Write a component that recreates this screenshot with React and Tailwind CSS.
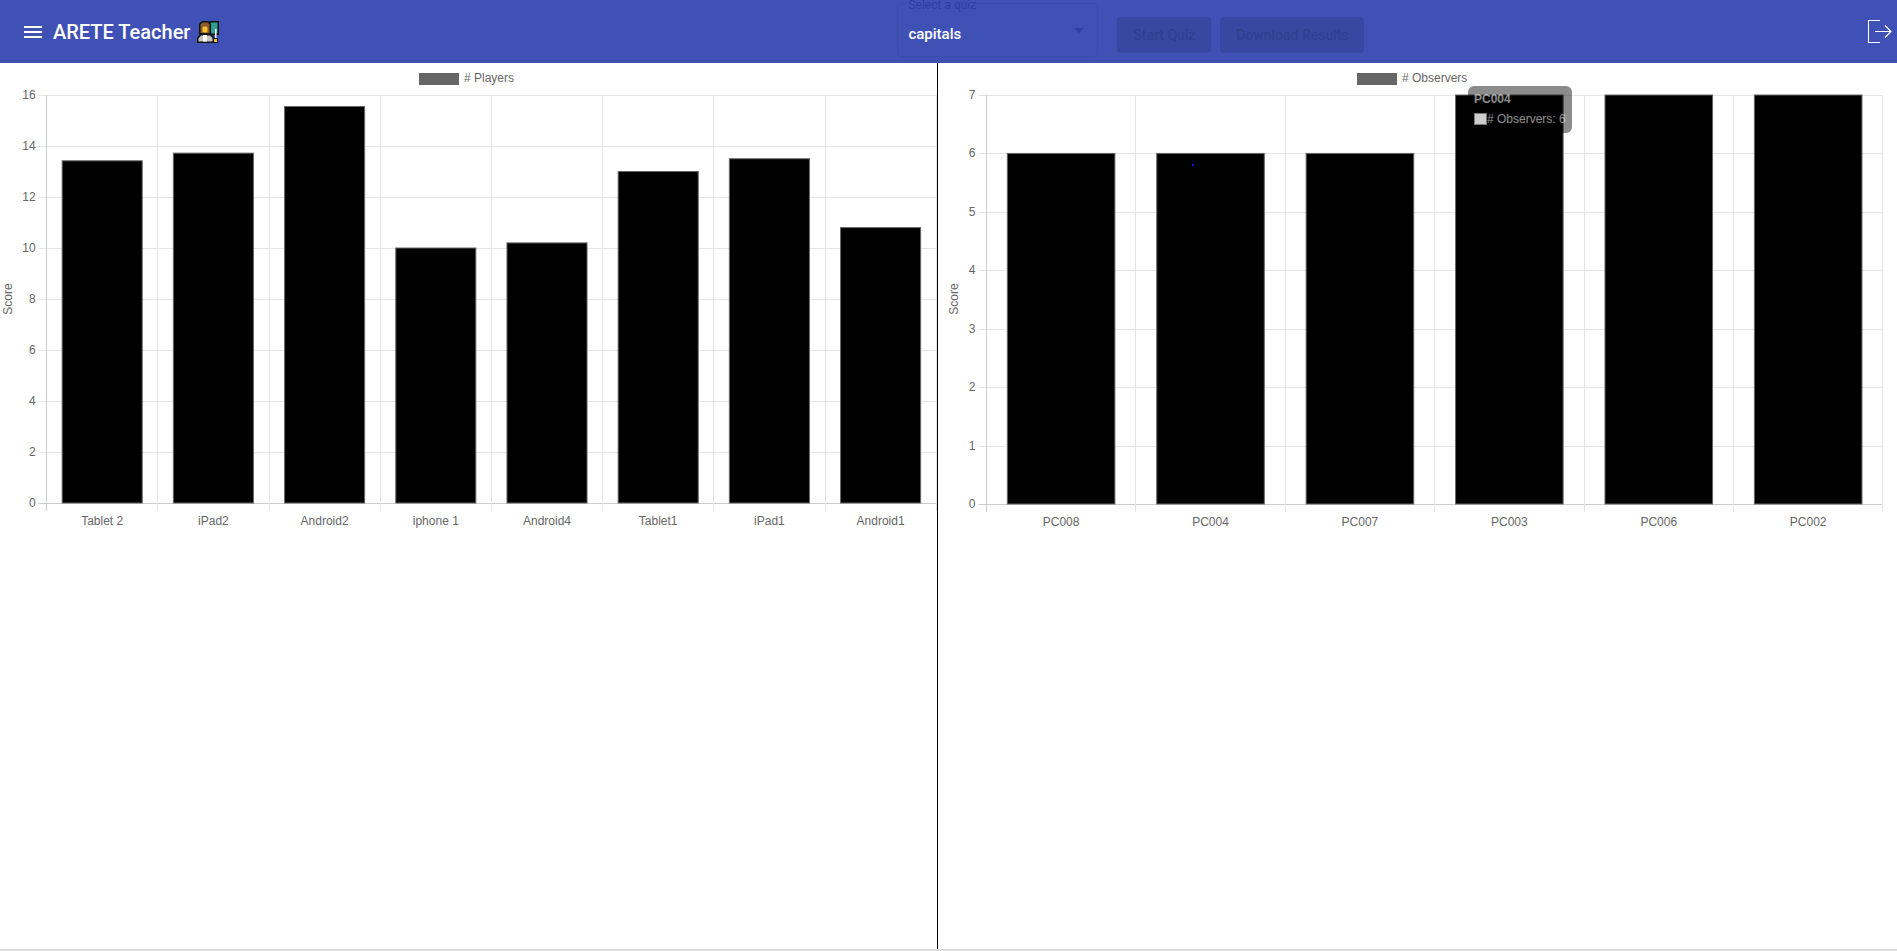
import { useState } from 'react';

const players = [
  { label: 'Tablet 2', value: 13.42 },
  { label: 'iPad2', value: 13.72 },
  { label: 'Android2', value: 15.55 },
  { label: 'iphone 1', value: 10 },
  { label: 'Android4', value: 10.2 },
  { label: 'Tablet1', value: 13 },
  { label: 'iPad1', value: 13.5 },
  { label: 'Android1', value: 10.8 },
];

const observers = [
  { label: 'PC008', value: 6 },
  { label: 'PC004', value: 6 },
  { label: 'PC007', value: 6 },
  { label: 'PC003', value: 7 },
  { label: 'PC006', value: 7 },
  { label: 'PC002', value: 7 },
];

// bar chart drawn the way chart.js lays it out (72% bar width, ticks sticking out 8px)
const BarPanel = ({ data, legend, max, step, left, right, top, bottom, legendX, scoreX, width }) => {
  const catW = (right - left) / data.length;
  const unit = (bottom - top) / max;
  const ticks = [];
  for (let v = 0; v <= max; v += step) ticks.push(v);

  return (
    <svg width={width} height={480} className="block font-['Liberation_Sans',Arial,sans-serif]">
      <rect x={legendX} y={10} width={40} height={12} fill="#666666" />
      <text x={legendX + 45} y={18.5} fontSize="12" fill="#666666">{legend}</text>
      <text transform={`translate(${scoreX} 236) rotate(-90)`} textAnchor="middle" fontSize="12" fill="#666666">Score</text>

      {ticks.map((v) => {
        const y = Math.round(bottom - v * unit) + 0.5;
        return (
          <g key={v}>
            <line x1={left - 8} x2={right} y1={y} y2={y} stroke={v === 0 ? '#cccccc' : '#e5e5e5'} />
            <text x={left - 11} y={y + 3.5} textAnchor="end" fontSize="12" fill="#666666">{v}</text>
          </g>
        );
      })}

      {data.map((d, i) => {
        const x = Math.floor(left + catW * i) + 0.5;
        return <line key={d.label} x1={x} x2={x} y1={top} y2={bottom + 8} stroke={i === 0 ? '#cccccc' : '#e5e5e5'} />;
      })}
      <line x1={Math.floor(right) + 0.5} x2={Math.floor(right) + 0.5} y1={top} y2={bottom + 8} stroke="#e5e5e5" />

      {data.map((d, i) => {
        const x = left + catW * i + catW * 0.14;
        const w = catW * 0.72;
        const y = bottom - d.value * unit;
        return (
          <g key={d.label}>
            <rect x={x} y={y} width={w} height={d.value * unit} fill="#000000" stroke="#666666" strokeWidth="1" />
            <text x={left + catW * i + catW / 2} y={bottom + 22} textAnchor="middle" fontSize="12" fill="#666666">{d.label}</text>
          </g>
        );
      })}
    </svg>
  );
};

const TeacherEmoji = () => (
  <svg width="24" height="24" viewBox="0 0 24 24" className="ml-[6px] shrink-0">
    {/* blackboard */}
    <rect x="13" y="1" width="10" height="14" fill="#111111" />
    <rect x="14.5" y="2.5" width="7" height="11" fill="#2f9e8f" />
    {/* hair and face */}
    <path d="M6 1 h6 l3 3 v10 H3 V4 Z" fill="#111111" />
    <path d="M6.5 2.5 h5 l2 2 v8.5 H4.5 V4.5 Z" fill="#8a5a30" />
    <rect x="6.5" y="6.5" width="5" height="6" rx="1.5" fill="#f7c02c" />
    {/* coat */}
    <path d="M1 23 v-5 l3 -4 h11 l3 3 v6 Z" fill="#111111" />
    <path d="M2.5 21.5 v-3 l2.5 -3 h9 l2.5 2.5 v3.5 Z" fill="#c6c6c6" />
    <rect x="7" y="15" width="4" height="6.5" fill="#ffffff" />
    {/* pointer and hand */}
    <rect x="19" y="9" width="1.5" height="10" fill="#ffffff" />
    <rect x="17" y="18" width="5" height="5" rx="1" fill="#111111" />
    <rect x="18" y="19" width="3" height="3" fill="#f7c02c" />
  </svg>
);

const App = () => {
  const [quiz] = useState('capitals');

  return (
    <div className="flex h-[951px] w-full flex-col overflow-hidden bg-white font-['Roboto',Arial,sans-serif]">
      {/* Toolbar */}
      <header className="flex h-[63px] shrink-0 items-center bg-[#3f51b5] pl-[21px] text-white">
        <svg width="24" height="24" viewBox="0 0 24 24" fill="currentColor" className="shrink-0">
          <path d="M3 18h18v-2H3v2zm0-5h18v-2H3v2zm0-7v2h18V6H3z" />
        </svg>
        <h1 className="ml-[8px] text-[20px] leading-none font-medium">ARETE Teacher</h1>
        <TeacherEmoji />

        <div className="relative mt-[3px] ml-[677px] flex h-[54px] w-[201px] items-center justify-between self-start rounded-[4px] border border-[#3b4cab] pr-[13px] pl-[10px]">
          <span className="absolute top-[-7px] left-[10px] bg-[#3f51b5] text-[12px] leading-[16px] text-[#303f9f]">Select a quiz</span>
          <span className="mt-[8px] text-[15px] font-medium text-white">{quiz}</span>
          <svg width="10" height="5" viewBox="0 0 10 5">
            <path d="M0 0h10L5 5z" fill="#303f9f" />
          </svg>
        </div>

        <button className="mt-[17px] ml-[19px] h-[36px] w-[94px] self-start rounded-[4px] bg-[#3848a0] text-[14px] font-medium text-[#303f8f]">Start Quiz</button>
        <button className="mt-[17px] ml-[9px] h-[36px] w-[144px] self-start rounded-[4px] bg-[#3848a0] text-[14px] font-medium text-[#303f8f]">Download Results</button>

        <svg width="25" height="25" viewBox="0 0 25 25" fill="none" stroke="#ffffff" strokeWidth="1.1" className="mr-[5px] ml-auto shrink-0">
          <path d="M13 1.5H1.5v22H13" />
          <path d="M8 12.5h16M18 6.5l6 6-6 6" />
        </svg>
      </header>

      {/* Charts */}
      <main className="flex min-h-0 flex-1 border-b-2 border-[#dddddd]">
        <section className="w-[937px] shrink-0">
          <BarPanel data={players} legend="# Players" max={16} step={2} left={46.6} right={936.2} top={32} bottom={440} legendX={419} scoreX={12} width={937} />
        </section>
        <div className="w-[1px] shrink-0 bg-black" />
        <section className="relative ml-[1px] flex-1">
          <BarPanel data={observers} legend="# Observers" max={7} step={1} left={47.4} right={943.9} top={32} bottom={441} legendX={418} scoreX={19} width={958} />

          {/* stray cursor speck on the PC004 bar */}
          <span className="absolute top-[101px] left-[253px] h-[2px] w-[2px] bg-[#1414e6]" />

          {/* hover tooltip, mid fade */}
          <div className="absolute top-[23px] left-[529px] h-[47px] w-[104px] rounded-[6px] bg-black/45 px-[6px] pt-[6px] font-['Liberation_Sans',Arial,sans-serif] text-[12px] leading-[14px] text-white/55">
            <div className="font-bold">PC004</div>
            <div className="mt-[6px] flex items-center whitespace-nowrap">
              <span className="h-[12px] w-[13px] shrink-0 border border-[#777777] bg-[#cccccc]" />
              # Observers: 6
            </div>
          </div>
        </section>
      </main>
    </div>
  );
};

export default App;
